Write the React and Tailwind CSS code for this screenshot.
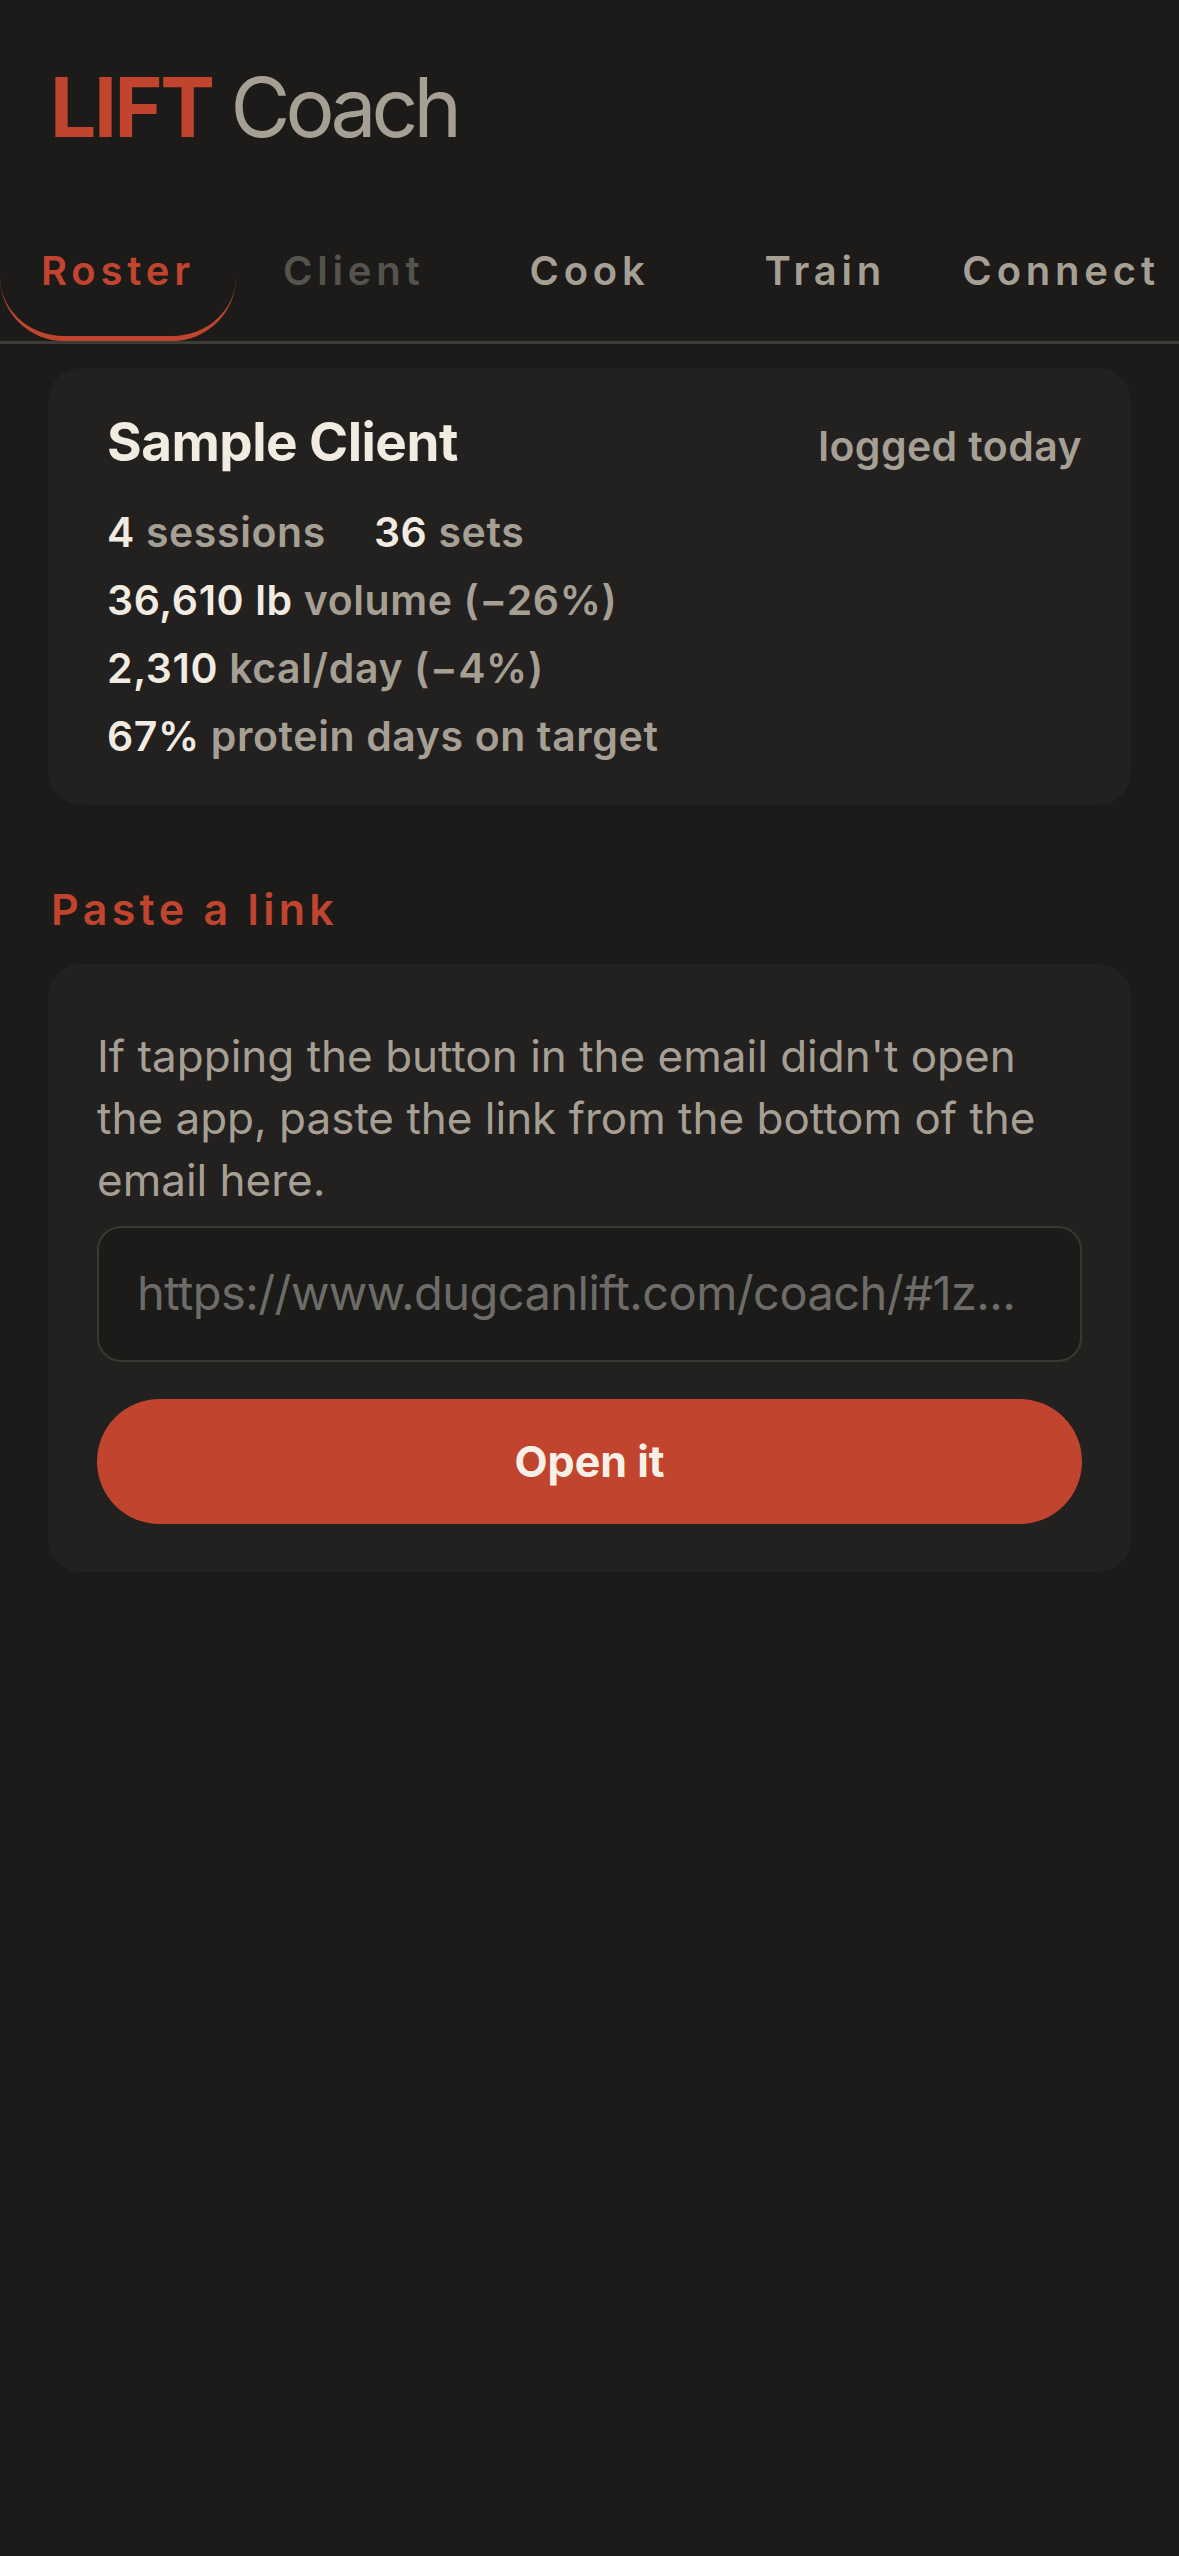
import { useState } from "react";

const tabs = ["Roster", "Client", "Cook", "Train", "Connect"];

function Stat({ value, label }) {
  return (
    <span>
      <span className="text-[#f1ebe2]">{value}</span>{" "}
      <span className="text-[#a69f93]">{label}</span>
    </span>
  );
}

export default function App() {
  const [active, setActive] = useState("Roster");
  const [link, setLink] = useState("");

  return (
    <div className="min-h-screen w-full bg-[#1c1b1a] font-['Inter','Liberation_Sans',sans-serif]">
      {/* header */}
      <h1 className="flex px-[50px] pt-[67px] text-[82px] leading-none">
        <span className="font-bold tracking-[-0.03em] text-[#c1452e]">LIFT</span>
        <span className="ml-[18px] font-normal tracking-[-0.06em] text-[#a69f93]">Coach</span>
      </h1>

      {/* tabs */}
      <div className="mt-[51px] flex border-b-[3px] border-[#3d3b36]">
        {tabs.map((t) => {
          const isActive = t === active;
          let color = "text-[#a69f93]";
          if (isActive) color = "text-[#c1452e]";
          else if (t === "Client") color = "text-[#55534e]";
          return (
            <button
              key={t}
              onClick={() => setActive(t)}
              className={
                "flex h-[141px] flex-1 items-center justify-center text-[40px] font-semibold leading-[48px] tracking-[0.12em] " +
                color +
                (isActive ? " rounded-b-[64px] border-b-[5px] border-[#c1452e] pt-[5px]" : "")
              }
            >
              {t}
            </button>
          );
        })}
      </div>

      {/* client card */}
      <div className="mx-[48px] mt-[24px] rounded-[33px] bg-[#222120] pb-[35px] pl-[59px] pr-[49px] pt-[42px]">
        <div className="flex items-baseline justify-between">
          <h2 className="text-[53px] font-bold leading-[64px] tracking-[-0.01em] text-[#f1ebe2]">
            Sample Client
          </h2>
          <span className="text-[41px] font-semibold tracking-[0.01em] text-[#a69f93]">logged today</span>
        </div>
        <div className="mt-[20px] text-[41px] font-semibold leading-[68px] tracking-[0.015em]">
          <div className="flex gap-[48px]">
            <Stat value="4" label="sessions" />
            <Stat value="36" label="sets" />
          </div>
          <div>
            <Stat value="36,610 lb" label="volume (−26%)" />
          </div>
          <div>
            <Stat value="2,310" label="kcal/day (−4%)" />
          </div>
          <div>
            <Stat value="67%" label="protein days on target" />
          </div>
        </div>
      </div>

      {/* paste a link */}
      <h3 className="mt-[78px] px-[51px] text-[43px] font-semibold leading-[52px] tracking-[0.1em] text-[#c1452e]">
        Paste a link
      </h3>
      <div className="mx-[48px] mt-[29px] rounded-[33px] bg-[#222120] px-[49px] pb-[48px] pt-[61px]">
        <p className="max-w-[960px] text-[44px] leading-[62px] text-[#a69f93]">
          If tapping the button in the email didn't open the app, paste the link from the bottom of the email here.
        </p>
        <div className="mt-[15px] flex h-[136px] items-center rounded-[24px] border-2 border-[#3a3833] bg-[#1c1b1a] px-[38px]">
          <input
            value={link}
            onChange={(e) => setLink(e.target.value)}
            placeholder="https://www.dugcanlift.com/coach/#1z..."
            className="w-full min-w-0 truncate bg-transparent text-[47px] tracking-[-0.012em] text-[#f1ebe2] outline-none placeholder:text-[#6d6c69]"
          />
        </div>
        <button className="mt-[37px] flex h-[125px] w-full items-center justify-center rounded-full bg-[#c1452e] text-[43px] font-bold text-[#f7f0e6]">
          Open it
        </button>
      </div>
    </div>
  );
}
